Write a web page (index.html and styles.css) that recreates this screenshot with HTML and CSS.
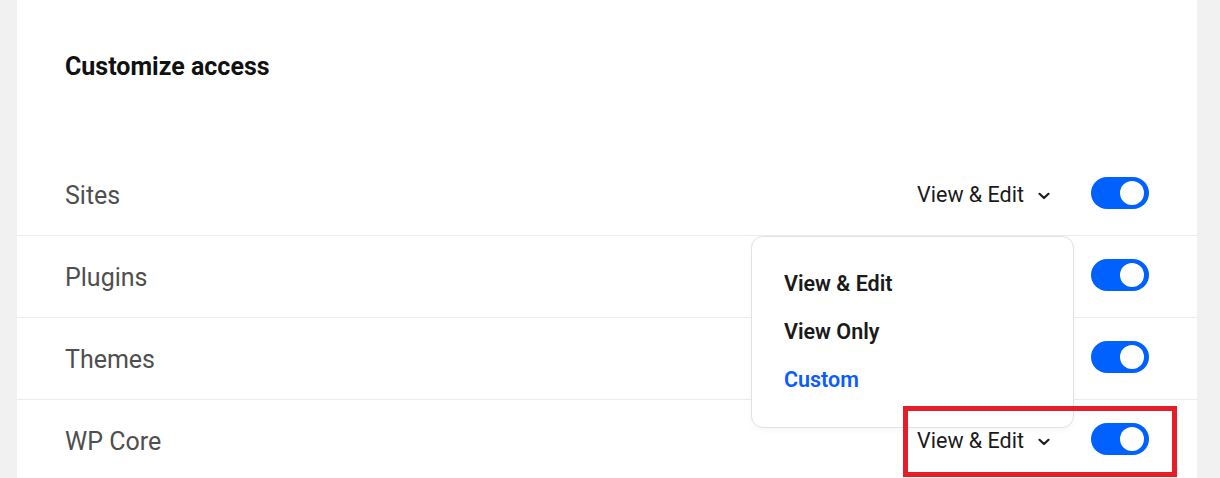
FILE: index.html
```html
<!DOCTYPE html>
<html lang="en">
<head>
<meta charset="utf-8">
<title>Customize access</title>
<link rel="stylesheet" href="styles.css">
</head>
<body>
<div class="page">
  <section class="card">
    <div class="card-head">
      <h2 class="title">Customize access</h2>
    </div>
    <div class="row">
      <span class="label">Sites</span>
      <div class="controls">
        <button class="select">View &amp; Edit
          <svg class="chev" width="12" height="8" viewBox="0 0 12 8"><path d="M1.5 1.8 L6 6 L10.5 1.8" fill="none" stroke="#1e1e1e" stroke-width="2.2" stroke-linecap="round" stroke-linejoin="round"/></svg>
        </button>
        <span class="toggle"><span class="knob"></span></span>
      </div>
    </div>
    <div class="row">
      <span class="label">Plugins</span>
      <div class="controls">
        <button class="select">View &amp; Edit
          <svg class="chev" width="12" height="8" viewBox="0 0 12 8"><path d="M1.5 1.8 L6 6 L10.5 1.8" fill="none" stroke="#1e1e1e" stroke-width="2.2" stroke-linecap="round" stroke-linejoin="round"/></svg>
        </button>
        <span class="toggle"><span class="knob"></span></span>
      </div>
    </div>
    <div class="row">
      <span class="label">Themes</span>
      <div class="controls">
        <button class="select">View &amp; Edit
          <svg class="chev" width="12" height="8" viewBox="0 0 12 8"><path d="M1.5 1.8 L6 6 L10.5 1.8" fill="none" stroke="#1e1e1e" stroke-width="2.2" stroke-linecap="round" stroke-linejoin="round"/></svg>
        </button>
        <span class="toggle"><span class="knob"></span></span>
      </div>
    </div>
    <div class="row">
      <span class="label">WP Core</span>
      <div class="controls">
        <button class="select">View &amp; Edit
          <svg class="chev" width="12" height="8" viewBox="0 0 12 8"><path d="M1.5 1.8 L6 6 L10.5 1.8" fill="none" stroke="#1e1e1e" stroke-width="2.2" stroke-linecap="round" stroke-linejoin="round"/></svg>
        </button>
        <span class="toggle"><span class="knob"></span></span>
      </div>
    </div>

    <ul class="menu">
      <li class="menu-item">View &amp; Edit</li>
      <li class="menu-item">View Only</li>
      <li class="menu-item active">Custom</li>
    </ul>
    <div class="highlight"></div>
  </section>
</div>
</body>
</html>
```

FILE: styles.css
```css
* { box-sizing: border-box; }
html, body {
  margin: 0;
  padding: 0;
  background: #f1f1f1;
  font-family: Roboto, "Liberation Sans", Arial, sans-serif;
  overflow: hidden;
}
.page {
  padding-left: 17px;
  width: 1197px;
}
.card {
  position: relative;
  background: #ffffff;
  width: 1180px;
  min-height: 560px;
}
.card-head {
  height: 154px;
  padding: 52px 48px 0;
}
.title {
  margin: 0;
  font-size: 25px;
  line-height: 30px;
  font-weight: 700;
  color: #111111;
}
.row {
  height: 82px;
  padding: 0 48px;
  display: flex;
  align-items: center;
  justify-content: space-between;
  border-bottom: 1px solid #ececec;
}
.label {
  font-size: 25px;
  color: #4f4f4f;
  line-height: 30px;
  margin-top: 2px;
}
.controls {
  display: flex;
  align-items: center;
  gap: 41px;
  margin-top: -3px;
}
.select {
  display: flex;
  align-items: center;
  gap: 14px;
  border: 0;
  background: none;
  padding: 0;
  font-family: inherit;
  font-size: 21.5px;
  color: #1a1a1a;
  line-height: 28px;
  margin-top: 3px;
}
.chev { display: block; margin-top: 2px; }
.toggle {
  width: 58px;
  height: 32px;
  border-radius: 16px;
  background: #0061ff;
  display: flex;
  align-items: center;
  justify-content: flex-end;
  padding-right: 5px;
}
.knob {
  width: 24px;
  height: 24px;
  border-radius: 50%;
  background: #ffffff;
}
.menu {
  position: absolute;
  left: 734px;
  top: 236px;
  width: 323px;
  height: 192px;
  margin: 0;
  padding: 24px 0 24px 32px;
  list-style: none;
  background: #ffffff;
  border: 1px solid #e2e2e2;
  border-radius: 12px;
  box-shadow: 0 2px 6px rgba(0,0,0,0.04);
}
.menu-item {
  height: 48px;
  line-height: 46px;
  font-size: 21.5px;
  font-weight: 600;
  color: #1a1a1a;
}
.menu-item.active { color: #0a5cff; }
.highlight {
  position: absolute;
  left: 886px;
  top: 406px;
  width: 274px;
  height: 71px;
  border: 5px solid #e61e28;
}
```
